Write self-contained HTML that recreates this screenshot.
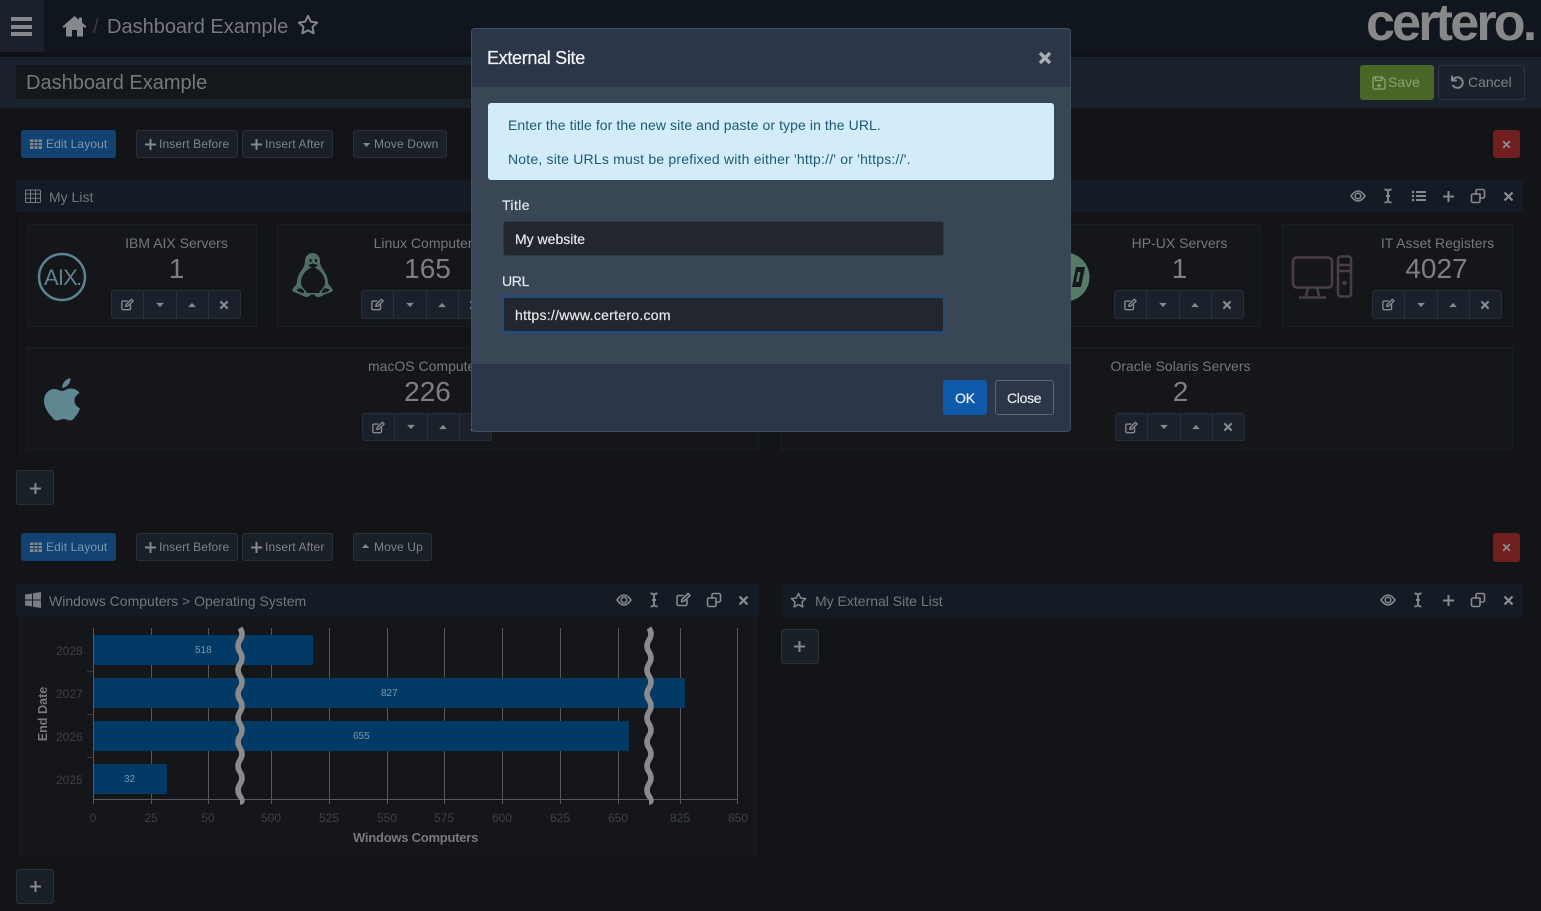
<!DOCTYPE html>
<html><head><meta charset="utf-8"><title>Dashboard Example</title>
<style>
*{box-sizing:border-box}
html,body{margin:0;padding:0;width:1541px;height:911px;overflow:hidden;background:#121417;font-family:"Liberation Sans",sans-serif;color:#80848a}
.a{position:absolute}
.t{position:absolute;white-space:nowrap}
.btn{position:absolute;height:28px;border:1px solid #2a313b;border-radius:3px;background:#1a2028;color:#7f8388;font-size:12px;line-height:26px;white-space:nowrap;letter-spacing:.12px}
.tile{position:absolute;border:1px solid #1b1e23;background:#14161a}
.name{position:absolute;text-align:center;font-size:14px;color:#74787d;white-space:nowrap}
.num{position:absolute;text-align:center;font-size:28px;color:#7d7f81;white-space:nowrap;line-height:32px}
.grp{position:absolute;width:130px;height:29px;border:1px solid #262e38;border-radius:3px;background:#1a212a;display:flex}
.grp i{flex:1;border-right:1px solid #2a323d;display:flex;align-items:center;justify-content:center}
.grp i:last-child{border-right:0}
svg{display:block;overflow:visible}
.ic{fill:none;stroke:#85888c;stroke-width:1.6;stroke-linecap:round;stroke-linejoin:round}
.hd{position:absolute;background:#141b24;border-bottom:1px solid #111519}
.tick{position:absolute;font-size:12px;color:#3f4144;white-space:nowrap;text-align:center;width:40px}
.m{font-family:"Liberation Sans",sans-serif}
.bd{-webkit-text-stroke:.2px currentColor}
</style></head><body>
<svg width="0" height="0" style="position:absolute">
<defs>
<g id="edit"><path d="M11 8v4a1.5 1.5 0 0 1-1.5 1.5h-7A1.5 1.5 0 0 1 1 12V5a1.5 1.5 0 0 1 1.5-1.5H7"/><path d="M5.5 9.700 6 7.500 12 1.500 14 3.500 8 9.300z"/></g>
<path id="cd" d="M1 1h9L5.500 6z" fill="#85888c" stroke="none"/>
<path id="cu" d="M1 6h9L5.500 1z" fill="#85888c" stroke="none"/>
<path id="x" d="M1.500 1.500l8 8M9.500 1.500l-8 8" fill="none" stroke="#8b8e91" stroke-width="2.200"/>
<path id="pl" d="M6.500 1v11M1 6.500h11" fill="none" stroke="#85888c" stroke-width="2"/>
<g id="eye"><path d="M1 8C3.500 4.500 5.500 3 8 3s4.500 1.500 7 5c-2.500 3.500-4.500 5-7 5S3.500 11.500 1 8z"/><circle cx="8" cy="8" r="2.800"/></g>
<path id="cur" d="M1.500 1.500c2 0 3 .5 3.500 1.500.5-1 1.500-1.500 3.500-1.500M5 3v10M3 8h4M1.500 14.500c2 0 3-.5 3.500-1.500.5 1 1.500 1.500 3.500 1.500" fill="none" stroke="#85888c" stroke-width="1.900"/>
<g id="lst" fill="#85888c" stroke="none"><rect x="5" y="2" width="10" height="2"/><rect x="5" y="6" width="10" height="2"/><rect x="5" y="10" width="10" height="2"/><circle cx="2" cy="3" r="1.300"/><circle cx="2" cy="7" r="1.300"/><circle cx="2" cy="11" r="1.300"/></g>
<g id="cp"><path d="M10 6H3a1.500 1.500 0 0 0-1.500 1.500V13A1.500 1.500 0 0 0 3 14.500h5.500A1.500 1.500 0 0 0 10 13z"/><path d="M6 6V3a1.500 1.500 0 0 1 1.500-1.500H13A1.500 1.500 0 0 1 14.500 3v5.500A1.500 1.500 0 0 1 13 10h-3"/></g>
<path id="st" d="M9 1.500l2.300 4.800 5.200.700-3.800 3.600.9 5.200L9 13.300l-4.600 2.500.9-5.200L1.500 7l5.200-.700z"/>
<g id="gridf" fill="#85888c"><path d="M0 1.500h12v9.500H0z"/><path d="M0 4.500h12M0 7.800h12M4 1.500v9.500M8 1.500v9.500" stroke="#114272" stroke-width="1" fill="none"/></g>
</defs>
</svg>

<!-- top bar -->
<div class="a" style="left:0;top:0;width:1541px;height:52px;background:#10161d"></div>
<div class="a" style="left:0;top:52px;width:1541px;height:5px;background:#0e1115"></div>
<div class="a" style="left:0;top:0;width:44px;height:52px;background:#1a212a"></div>
<div class="a" style="left:11px;top:17px;width:21px;height:3.500px;background:#85888c"></div>
<div class="a" style="left:11px;top:25px;width:21px;height:3.500px;background:#85888c"></div>
<div class="a" style="left:11px;top:32px;width:21px;height:3.500px;background:#85888c"></div>
<svg class="a" style="left:62px;top:15px" width="25" height="22" viewBox="0 0 25 22"><path fill="#85888c" d="M12.500 1 0.500 11.500 2 13l2-1.700V21.500h6V15h5v6.500h6V11.300L23 13l1.500-1.500L20 7.500V2.500h-3v2.400z"/></svg>
<div class="t" style="left:93px;top:16px;font-size:20px;color:#3b3f45">/</div>
<div class="t" style="left:107px;top:16px;font-size:20px;color:#76797e">Dashboard Example</div>
<svg class="a ic" style="left:297px;top:14px" width="22" height="22" viewBox="0 0 18 18"><use href="#st"/></svg>
<div class="t" style="left:1366px;top:-6px;font-size:52px;font-weight:bold;color:#87888a;letter-spacing:-2.800px;line-height:58px">certero.</div>

<!-- sub bar -->
<div class="a" style="left:0;top:57px;width:1541px;height:51px;background:#1a222c"></div>
<div class="a" style="left:16px;top:65px;width:470px;height:34px;background:#14171b"></div>
<div class="t" style="left:26px;top:72px;font-size:20px;color:#74777c">Dashboard Example</div>
<div class="a" style="left:1360px;top:65px;width:74px;height:35px;background:#4a6626;border-radius:3px"></div>
<svg class="a ic" style="left:1372px;top:76px;stroke:#8ba37a;stroke-width:1.300" width="14" height="14" viewBox="0 0 14 14"><path d="M1 2.500A1.500 1.500 0 0 1 2.500 1h7.500L13 4v7.500a1.500 1.500 0 0 1-1.500 1.500h-9A1.500 1.500 0 0 1 1 11.500z"/><path d="M3.500 1v3.500h6V1M7 8v3M5.500 9.500h3"/></svg>
<div class="t" style="left:1388px;top:74px;font-size:14px;color:#8ba37a">Save</div>
<div class="a" style="left:1438px;top:65px;width:87px;height:35px;border:1px solid #2d3540;border-radius:3px"></div>
<svg class="a ic" style="left:1450px;top:75px;stroke-width:2" width="14" height="14" viewBox="0 0 14 14"><path d="M2 1.500v4h4M2.500 5.500A5.300 5.300 0 1 1 3 10.500"/></svg>
<div class="t" style="left:1468px;top:74px;font-size:14px;color:#7f8388">Cancel</div>

<!-- row 1 toolbar -->
<div class="btn" style="left:21px;top:130px;width:95px;background:#114272;border-color:#114272;color:#7d96ac;padding-left:24px">Edit Layout</div>
<svg class="a" style="left:30px;top:138px" width="12" height="12" viewBox="0 0 12 12"><use href="#gridf"/></svg>
<div class="btn" style="left:136px;top:130px;width:102px;padding-left:22px">Insert Before</div>
<svg class="a" style="left:144px;top:138px" width="13" height="13" viewBox="0 0 13 13"><use href="#pl"/></svg>
<div class="btn" style="left:242px;top:130px;width:91px;padding-left:22px">Insert After</div>
<svg class="a" style="left:250px;top:138px" width="13" height="13" viewBox="0 0 13 13"><use href="#pl"/></svg>
<div class="btn" style="left:353px;top:130px;width:94px;padding-left:20px">Move Down</div>
<svg class="a" style="left:362px;top:142px" width="9" height="6" viewBox="0 0 11 7"><use href="#cd"/></svg>
<div class="a" style="left:1493px;top:130px;width:27px;height:28px;background:#701e1e;border-radius:3px"></div>
<svg class="a" style="left:1502px;top:140px" width="9" height="9" viewBox="0 0 11 11"><use href="#x"/></svg>

<!-- My List panel -->
<div class="a" style="left:16px;top:180px;width:1507px;height:279px;border:1px solid #0e1013;border-top:0"></div>
<div class="hd" style="left:16px;top:180px;width:1507px;height:33px"></div>
<svg class="a" style="left:25px;top:189px;stroke:#777a7f;stroke-width:1;fill:none" width="16" height="15" viewBox="0 0 16 15"><rect x=".5" y="1" width="15" height="12.500" rx="1"/><path d="M.5 5h15M.5 9.200h15M5.500 1v12.500M10.500 1v12.500"/></svg>
<div class="t" style="left:49px;top:189px;font-size:14px;color:#73777c">My List</div>
<svg class="a ic" style="left:1350px;top:188px" width="16" height="16" viewBox="0 0 16 16"><use href="#eye"/></svg>
<svg class="a" style="left:1383px;top:188px" width="10" height="16" viewBox="0 0 10 16"><use href="#cur"/></svg>
<svg class="a" style="left:1411px;top:189px" width="15" height="14" viewBox="0 0 15 14"><use href="#lst"/></svg>
<svg class="a" style="left:1442px;top:190px" width="13" height="13" viewBox="0 0 13 13"><use href="#pl"/></svg>
<svg class="a ic" style="left:1470px;top:188px" width="16" height="16" viewBox="0 0 16 16"><use href="#cp"/></svg>
<svg class="a" style="left:1503px;top:191px" width="11" height="11" viewBox="0 0 11 11"><use href="#x"/></svg>

<!-- tiles -->
<div class="tile" style="left:27px;top:224px;width:230px;height:103px"></div>
<div class="tile" style="left:277px;top:224px;width:230px;height:103px"></div>
<div class="tile" style="left:1030px;top:224px;width:231px;height:103px"></div>
<div class="tile" style="left:1282px;top:224px;width:231px;height:103px"></div>
<div class="tile" style="left:27px;top:347px;width:732px;height:103px"></div>
<div class="tile" style="left:780px;top:347px;width:733px;height:103px"></div>

<!-- AIX -->
<svg class="a" style="left:37px;top:252px" width="50" height="50" viewBox="0 0 50 50"><circle cx="25" cy="25" r="23" fill="none" stroke="#5c8290" stroke-width="2.500"/></svg>
<div class="t" style="left:44px;top:265px;font-size:22px;color:#5c8290;letter-spacing:-.8px">AIX</div>
<div class="a" style="left:78px;top:283px;width:2px;height:2px;background:#5c8290"></div>
<div class="name" style="left:111px;top:235px;width:131px">IBM AIX Servers</div>
<div class="num" style="left:111px;top:253px;width:131px">1</div>
<div class="grp" style="left:111px;top:290px"><i><svg class="ic" width="13" height="13" viewBox="0 0 15 15"><use href="#edit"/></svg></i><i><svg width="10" height="6" viewBox="0 0 11 7"><use href="#cd"/></svg></i><i><svg width="10" height="6" viewBox="0 0 11 7"><use href="#cu"/></svg></i><i><svg width="10" height="10" viewBox="0 0 11 11"><use href="#x"/></svg></i></div>

<!-- Tux -->
<svg class="a" style="left:291px;top:252px" width="43" height="46" viewBox="0 0 43 46"><path fill="#4f6f64" d="M22 1c-5 0-8 3.500-8 8 0 3.500-1 5.500-3 8.500-3 4.500-5 8.500-5 13 0 1-.5 2-2.500 4L1 38c0 1.500 3 2.500 6 3.500 3 1 6 3.500 8.500 3.500s3.500-1.500 4-2.500h4c.5 1 1.500 2.500 4 2.500s5.500-2.500 8.500-3.500 6-2 6-3.500l-2.500-3.500c-2-2-2.500-3-2.500-4 0-4.500-2-8.500-5-13-2-3-3-5-3-8.500 0-4.500-3-8-8-8z"/><path fill="#14161a" d="M22 15c-7 2-12 9-12 15 0 3 1 6 4 8l2 3h12l2-3c3-2 4-5 4-8 0-6-5-13-12-15z"/><path fill="#4f6f64" d="M10 33l5 7-3 3-8-4zM34 33l-5 7 3 3 8-4z"/><path fill="#14161a" d="M8 36.500c2-.5 3.500.5 4.500 2s1 2.500-.5 2.500-5-1.500-6-2.500.5-1.500 2-2zM36 36.500c-2-.5-3.500.5-4.500 2s-1 2.500.5 2.500 5-1.500 6-2.500-.5-1.500-2-2z"/><path fill="#14161a" d="M18.500 7h2v3h-2zM24 7h2v3h-2zM17 13c2 2 3 2.500 5 2.500s3-.5 5-2.500l-5-1.500z"/></svg>
<div class="name" style="left:361px;top:235px;width:131px">Linux Computers</div>
<div class="num" style="left:362px;top:253px;width:131px">165</div>
<div class="grp" style="left:361px;top:290px"><i><svg class="ic" width="13" height="13" viewBox="0 0 15 15"><use href="#edit"/></svg></i><i><svg width="10" height="6" viewBox="0 0 11 7"><use href="#cd"/></svg></i><i><svg width="10" height="6" viewBox="0 0 11 7"><use href="#cu"/></svg></i><i><svg width="10" height="10" viewBox="0 0 11 11"><use href="#x"/></svg></i></div>

<!-- HP -->
<svg class="a" style="left:1040px;top:252px" width="50" height="50" viewBox="0 0 50 50"><circle cx="25" cy="25" r="24.500" fill="#557a68"/><path d="M36 15h9l-4 20h-9z" fill="#14161a"/><path d="M38 20h2.500l-2 10H36z" fill="#557a68"/></svg>
<div class="name" style="left:1114px;top:235px;width:131px">HP-UX Servers</div>
<div class="num" style="left:1114px;top:253px;width:131px">1</div>
<div class="grp" style="left:1114px;top:290px"><i><svg class="ic" width="13" height="13" viewBox="0 0 15 15"><use href="#edit"/></svg></i><i><svg width="10" height="6" viewBox="0 0 11 7"><use href="#cd"/></svg></i><i><svg width="10" height="6" viewBox="0 0 11 7"><use href="#cu"/></svg></i><i><svg width="10" height="10" viewBox="0 0 11 11"><use href="#x"/></svg></i></div>

<!-- Computer -->
<svg class="a" style="left:1291px;top:255px;fill:none;stroke:#4b3d44;stroke-width:2.600" width="62" height="45" viewBox="0 0 62 45"><rect x="2" y="2.500" width="39" height="30" rx="4"/><path d="M17 33l-2 8M26 33l2 8M8 42.500h27"/><rect x="47" y="1.500" width="13" height="40" rx="2.500"/><path d="M47 10h13M47 16h13"/><circle cx="53.500" cy="28" r="1" fill="#4b3d44"/></svg>
<div class="name" style="left:1372px;top:235px;width:131px">IT Asset Registers</div>
<div class="num" style="left:1371px;top:253px;width:131px">4027</div>
<div class="grp" style="left:1372px;top:290px"><i><svg class="ic" width="13" height="13" viewBox="0 0 15 15"><use href="#edit"/></svg></i><i><svg width="10" height="6" viewBox="0 0 11 7"><use href="#cd"/></svg></i><i><svg width="10" height="6" viewBox="0 0 11 7"><use href="#cu"/></svg></i><i><svg width="10" height="10" viewBox="0 0 11 11"><use href="#x"/></svg></i></div>

<!-- Apple -->
<svg class="a" style="left:44px;top:378px" width="36" height="44" viewBox="0 0 36 44"><path fill="#5f8791" d="M18 13c2 0 5-2.500 9-2.500 4 0 7 2 8.500 4.500-3.500 2-5 4.500-5 7.500 0 3.500 2 6 5.500 8-1 3-2.500 5.500-4.500 8-1.500 2-3 4-5.500 4s-3.500-1.500-6.500-1.500-4 1.500-6.500 1.500-4-2-6-4.500C4 35 0 29 0 23c0-7 4.500-12 10.500-12 3 0 5.500 2 7.500 2zM18 10c0-4 3-9 8.500-10 .3 5-3.500 9.500-8.500 10z"/></svg>
<div class="name" style="left:362px;top:358px;width:131px">macOS Computers</div>
<div class="num" style="left:362px;top:376px;width:131px">226</div>
<div class="grp" style="left:362px;top:413px;height:28px"><i><svg class="ic" width="13" height="13" viewBox="0 0 15 15"><use href="#edit"/></svg></i><i><svg width="10" height="6" viewBox="0 0 11 7"><use href="#cd"/></svg></i><i><svg width="10" height="6" viewBox="0 0 11 7"><use href="#cu"/></svg></i><i><svg width="10" height="10" viewBox="0 0 11 11"><use href="#x"/></svg></i></div>

<div class="name" style="left:1100px;top:358px;width:161px">Oracle Solaris Servers</div>
<div class="num" style="left:1115px;top:376px;width:131px">2</div>
<div class="grp" style="left:1115px;top:413px;height:28px"><i><svg class="ic" width="13" height="13" viewBox="0 0 15 15"><use href="#edit"/></svg></i><i><svg width="10" height="6" viewBox="0 0 11 7"><use href="#cd"/></svg></i><i><svg width="10" height="6" viewBox="0 0 11 7"><use href="#cu"/></svg></i><i><svg width="10" height="10" viewBox="0 0 11 11"><use href="#x"/></svg></i></div>

<div class="a" style="left:16px;top:470px;width:38px;height:35px;background:#1a2028;border:1px solid #2a313b;border-radius:3px"></div>
<svg class="a" style="left:29px;top:482px" width="13" height="13" viewBox="0 0 13 13"><use href="#pl"/></svg>

<!-- row 2 toolbar -->
<div class="btn" style="left:21px;top:533px;width:95px;background:#114272;border-color:#114272;color:#7d96ac;padding-left:24px">Edit Layout</div>
<svg class="a" style="left:30px;top:541px" width="12" height="12" viewBox="0 0 12 12"><use href="#gridf"/></svg>
<div class="btn" style="left:136px;top:533px;width:102px;padding-left:22px">Insert Before</div>
<svg class="a" style="left:144px;top:541px" width="13" height="13" viewBox="0 0 13 13"><use href="#pl"/></svg>
<div class="btn" style="left:242px;top:533px;width:91px;padding-left:22px">Insert After</div>
<svg class="a" style="left:250px;top:541px" width="13" height="13" viewBox="0 0 13 13"><use href="#pl"/></svg>
<div class="btn" style="left:353px;top:533px;width:79px;padding-left:20px">Move Up</div>
<svg class="a" style="left:361px;top:543px" width="9" height="6" viewBox="0 0 11 7"><use href="#cu"/></svg>
<div class="a" style="left:1493px;top:533px;width:27px;height:29px;background:#701e1e;border-radius:3px"></div>
<svg class="a" style="left:1502px;top:543px" width="9" height="9" viewBox="0 0 11 11"><use href="#x"/></svg>

<!-- Windows panel -->
<div class="a" style="left:16px;top:584px;width:743px;height:275px;border:1px solid #0e1013;border-top:0;background:#14161a"></div>
<div class="hd" style="left:16px;top:584px;width:743px;height:34px"></div>
<svg class="a" style="left:25px;top:592px" width="16" height="16" viewBox="0 0 16 16"><path fill="#7a7d82" d="M0 2.500l7-1v6H0zM8 1.300l8-1.300v7.500H8zM0 8.500h7v6l-7-1zM8 8.500h8V16l-8-1.300z"/></svg>
<div class="t" style="left:49px;top:593px;font-size:14px;color:#73777c">Windows Computers &gt; Operating System</div>
<svg class="a ic" style="left:616px;top:592px" width="16" height="16" viewBox="0 0 16 16"><use href="#eye"/></svg>
<svg class="a" style="left:649px;top:592px" width="10" height="16" viewBox="0 0 10 16"><use href="#cur"/></svg>
<svg class="a ic" style="left:676px;top:592px" width="15" height="15" viewBox="0 0 15 15"><use href="#edit"/></svg>
<svg class="a ic" style="left:706px;top:592px" width="16" height="16" viewBox="0 0 16 16"><use href="#cp"/></svg>
<svg class="a" style="left:738px;top:595px" width="11" height="11" viewBox="0 0 11 11"><use href="#x"/></svg>

<!-- chart -->
<svg class="a" style="left:0;top:0" width="1541" height="911">
<g stroke="#56585b" stroke-width="1">
<path d="M93.500 628v176M151.500 628v176M208.500 628v176M271.500 628v176M329.500 628v176M387.500 628v176M444.500 628v176M502.500 628v176M560.500 628v176M618.500 628v176M680.500 628v176M737.500 628v176"/>
<path d="M93 799.500h645"/>
</g>
<path d="M87 671.500h6M87 714.500h6M87 757.500h6" stroke="#3a3733" stroke-width="1"/>
<g fill="#023a66">
<rect x="94" y="635" width="219" height="30"/>
<rect x="94" y="678" width="591" height="30"/>
<rect x="94" y="721" width="535" height="30"/>
<rect x="94" y="764" width="73" height="30"/>
</g>
<g fill="none" stroke="#8b8b8b" stroke-width="5.500">
<path d="M240 628q4 6 0 12t0 12t0 12t0 12t0 12t0 12t0 12t0 12t0 12t0 12t0 12t0 12t0 12t0 12t0 6"/>
<path d="M649 628q4 6 0 12t0 12t0 12t0 12t0 12t0 12t0 12t0 12t0 12t0 12t0 12t0 12t0 12t0 12t0 6"/>
</g>
</svg>
<div class="t m" style="left:195px;top:645px;font-size:10px;color:#7d97ad">518</div>
<div class="t m" style="left:381px;top:688px;font-size:10px;color:#7d97ad">827</div>
<div class="t m" style="left:353px;top:731px;font-size:10px;color:#7d97ad">655</div>
<div class="t m" style="left:124px;top:774px;font-size:10px;color:#7d97ad">32</div>
<div class="t" style="left:56px;top:644px;font-size:12px;color:#3f4144">2028</div>
<div class="t" style="left:56px;top:687px;font-size:12px;color:#3f4144">2027</div>
<div class="t" style="left:56px;top:730px;font-size:12px;color:#3f4144">2026</div>
<div class="t" style="left:56px;top:773px;font-size:12px;color:#3f4144">2025</div>
<div class="t" style="left:14px;top:707px;width:58px;text-align:center;font-size:12.600px;font-weight:bold;color:#77797c;transform:rotate(-90deg)">End Date</div>
<div class="tick" style="left:73px;top:811px">0</div>
<div class="tick" style="left:131px;top:811px">25</div>
<div class="tick" style="left:188px;top:811px">50</div>
<div class="tick" style="left:251px;top:811px">500</div>
<div class="tick" style="left:309px;top:811px">525</div>
<div class="tick" style="left:367px;top:811px">550</div>
<div class="tick" style="left:424px;top:811px">575</div>
<div class="tick" style="left:482px;top:811px">600</div>
<div class="tick" style="left:540px;top:811px">625</div>
<div class="tick" style="left:598px;top:811px">650</div>
<div class="tick" style="left:660px;top:811px">825</div>
<div class="tick" style="left:718px;top:811px">850</div>
<div class="t" style="left:353px;top:830px;font-size:13px;font-weight:bold;color:#77797c;letter-spacing:-.24px">Windows Computers</div>

<div class="a" style="left:16px;top:869px;width:38px;height:35px;background:#1a2028;border:1px solid #2a313b;border-radius:3px"></div>
<svg class="a" style="left:29px;top:880px" width="13" height="13" viewBox="0 0 13 13"><use href="#pl"/></svg>

<!-- External site list -->
<div class="hd" style="left:782px;top:584px;width:741px;height:34px"></div>
<svg class="a ic" style="left:790px;top:592px" width="17" height="17" viewBox="0 0 18 18"><use href="#st"/></svg>
<div class="t" style="left:815px;top:593px;font-size:14px;color:#73777c">My External Site List</div>
<svg class="a ic" style="left:1380px;top:592px" width="16" height="16" viewBox="0 0 16 16"><use href="#eye"/></svg>
<svg class="a" style="left:1413px;top:592px" width="10" height="16" viewBox="0 0 10 16"><use href="#cur"/></svg>
<svg class="a" style="left:1442px;top:594px" width="13" height="13" viewBox="0 0 13 13"><use href="#pl"/></svg>
<svg class="a ic" style="left:1470px;top:592px" width="16" height="16" viewBox="0 0 16 16"><use href="#cp"/></svg>
<svg class="a" style="left:1503px;top:595px" width="11" height="11" viewBox="0 0 11 11"><use href="#x"/></svg>
<div class="a" style="left:781px;top:629px;width:38px;height:35px;background:#1a2028;border:1px solid #2a313b;border-radius:3px"></div>
<svg class="a" style="left:793px;top:640px" width="13" height="13" viewBox="0 0 13 13"><use href="#pl"/></svg>

<!-- modal -->
<div class="a" style="left:471px;top:28px;width:600px;height:404px;background:#384656;border:1px solid #414e5e;border-radius:4px;overflow:hidden">
  <div class="a" style="left:0;top:0;width:598px;height:58px;background:#2b3748"></div>
  <div class="a" style="left:0;top:335px;width:598px;height:68px;background:#2b3748"></div>
</div>
<div class="t bd" style="left:487px;top:48px;font-size:18px;color:#f2f4f6;letter-spacing:-.32px">External Site</div>
<svg class="a" style="left:1038px;top:51px" width="14" height="14" viewBox="0 0 14 14"><path d="M2 2l10 10M12 2L2 12" stroke="#a9adb2" stroke-width="3.400" fill="none"/></svg>
<div class="a" style="left:488px;top:103px;width:566px;height:77px;background:#d2ecf9;border-radius:3px"></div>
<div class="t" style="left:508px;top:117px;font-size:14px;color:#1f5a70;letter-spacing:.09px">Enter the title for the new site and paste or type in the URL.</div>
<div class="t" style="left:508px;top:151px;font-size:14px;color:#1f5a70;letter-spacing:.2px">Note, site URLs must be prefixed with either 'http://' or 'https://'.</div>
<div class="t bd" style="left:502px;top:197px;font-size:14px;color:#e3e6e9;letter-spacing:.4px">Title</div>
<div class="a" style="left:503px;top:221px;width:441px;height:35px;background:#22272f;border:1px solid #2f3845;border-radius:3px"></div>
<div class="t bd" style="left:515px;top:231px;font-size:14px;color:#e6e8ea;letter-spacing:0">My website</div>
<div class="t bd" style="left:502px;top:273px;font-size:14px;color:#e3e6e9;letter-spacing:-.3px">URL</div>
<div class="a" style="left:503px;top:297px;width:441px;height:35px;background:#22272f;border:1px solid #1a4d80;box-shadow:0 0 0 2px #294a70;border-radius:3px"></div>
<div class="t bd" style="left:515px;top:307px;font-size:14px;color:#e6e8ea;letter-spacing:.28px">https://www.certero.com</div>
<div class="a" style="left:943px;top:380px;width:44px;height:35px;background:#0f5aa8;border-radius:3px"></div>
<div class="t bd" style="left:955px;top:390px;font-size:14px;color:#eef2f6;letter-spacing:-.2px">OK</div>
<div class="a" style="left:995px;top:380px;width:59px;height:35px;border:1px solid #5d6874;border-radius:3px"></div>
<div class="t bd" style="left:1007px;top:390px;font-size:14px;color:#e3e6e9;letter-spacing:-.3px">Close</div>
</body></html>
